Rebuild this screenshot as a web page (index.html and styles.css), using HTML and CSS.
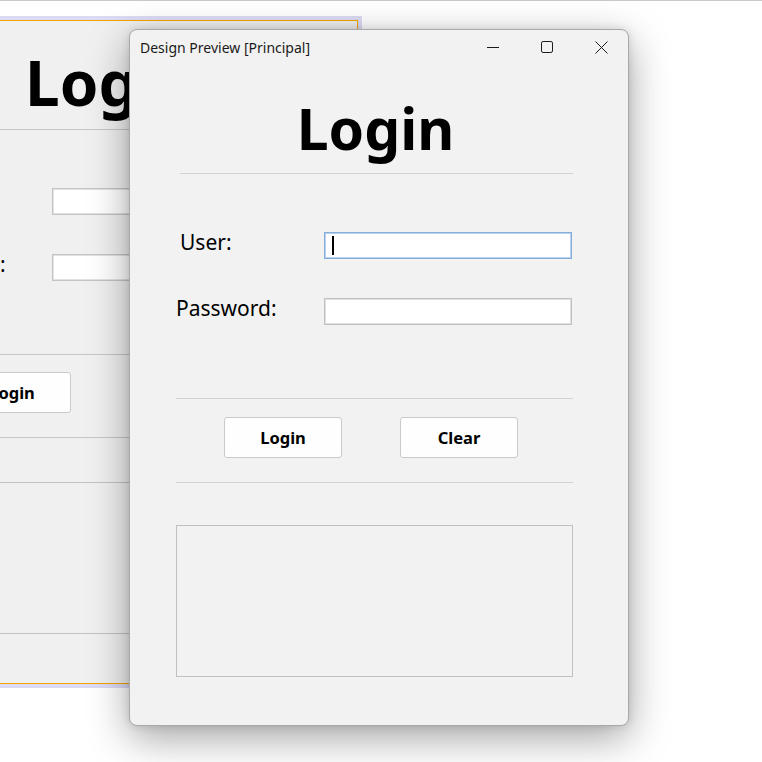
FILE: index.html
```html
<!DOCTYPE html>
<html>
<head>
<meta charset="utf-8">
<link rel="stylesheet" href="styles.css">
</head>
<body>
<div class="desktop">
  <div class="win back">
    <div class="b-heading">Login</div>
    <div class="b-rule first"></div>
    <div class="b-row r1"><span class="b-label">User:</span><div class="b-input"></div></div>
    <div class="b-row r2"><span class="b-label">Password:</span><div class="b-input"></div></div>
    <div class="b-rule r3"></div>
    <div class="b-btns"><div class="btn">Login</div></div>
    <div class="b-rule r4"></div>
    <div class="b-box"></div>
  </div>

  <div class="win front">
    <div class="titlebar">
      <span class="title">Design Preview [Principal]</span>
      <div class="caps">
        <div class="cap"><svg width="12" height="12" viewBox="0 0 12 12"><path d="M0 6.5H12" stroke="#1a1a1a" stroke-width="1" fill="none"/></svg></div>
        <div class="cap"><svg width="12" height="12" viewBox="0 0 12 12"><rect x="0.5" y="0.5" width="11" height="11" rx="1.6" stroke="#1a1a1a" stroke-width="1" fill="none"/></svg></div>
        <div class="cap"><svg width="13" height="13" viewBox="0 0 13 13"><path d="M0.5 0.5L12.5 12.5M12.5 0.5L0.5 12.5" stroke="#1a1a1a" stroke-width="1" fill="none"/></svg></div>
      </div>
    </div>
    <div class="content">
      <h1 class="heading">Login</h1>
      <div class="rule head-rule"></div>
      <div class="row user-row">
        <span class="label user-label">User:</span>
        <div class="input focused"><span class="caret"></span></div>
      </div>
      <div class="row pass-row">
        <span class="label">Password:</span>
        <div class="input"></div>
      </div>
      <div class="rule r-mid"></div>
      <div class="btns">
        <div class="btn">Login</div>
        <div class="btn">Clear</div>
      </div>
      <div class="rule r-low"></div>
      <div class="box"></div>
    </div>
  </div>
</div>
</body>
</html>
```

FILE: styles.css
```css
html, body {
  margin: 0;
  padding: 0;
}
body {
  width: 762px;
  height: 762px;
  overflow: hidden;
  background: #ffffff;
  font-family: "Noto Sans", "Open Sans", sans-serif;
  color: #000;
}
.desktop {
  position: relative;
  width: 762px;
  height: 762px;
  border-top: 1px solid #c9c9c9;
  box-sizing: border-box;
}
.win {
  position: absolute;
  box-sizing: border-box;
}

/* background window */
.back {
  left: -141px;
  top: 19px;
  width: 499px;
  height: 664px;
  background: #f0f0f0;
  border: 1px solid #f5a200;
  box-shadow: 0 0 0 4px #dcdbf5;
  overflow: hidden;
}
.b-heading {
  margin-top: 30px;
  padding-left: 165px;
  font-weight: 700;
  font-size: 62px;
  line-height: 63px;
  height: 63px;
  white-space: nowrap;
}
.b-rule {
  height: 1px;
  background: #c6c6c6;
}
.b-rule.first { margin-top: 15px; }
.b-row {
  display: flex;
  align-items: flex-start;
  padding-left: 45px;
  height: 27px;
}
.b-row.r1 { margin-top: 58px; }
.b-row.r2 { margin-top: 39px; }
.b-label {
  width: 147px;
  font-size: 21px;
  line-height: 27px;
  margin-top: -3px;
}
.b-input {
  width: 250px;
  height: 27px;
  box-sizing: border-box;
  background: #fff;
  border: 1px solid #c4c4c4;
  box-shadow: inset 0 0 0 1px #e2e2e2;
}
.b-rule.r3 { margin-top: 73px; }
.b-btns {
  margin-top: 17px;
  padding-left: 93px;
  display: flex;
}
.b-rule.r4 { margin-top: 24px; }
.b-box {
  margin-top: 44px;
  height: 150px;
  border-top: 1px solid #c2c2c2;
  border-bottom: 1px solid #c2c2c2;
}

/* front window */
.front {
  left: 129px;
  top: 28px;
  width: 500px;
  height: 697px;
  background: #f2f2f2;
  border: 1px solid #a9a9a9;
  border-radius: 8px;
  box-shadow: 0 12px 40px rgba(0, 0, 0, 0.36), 0 0 8px rgba(0, 0, 0, 0.12);
  display: flex;
  flex-direction: column;
}
.titlebar {
  height: 34px;
  display: flex;
  align-items: center;
  justify-content: space-between;
  padding-left: 10px;
}
.title {
  font-size: 14px;
  color: #1a1a1a;
  white-space: nowrap;
}
.caps {
  display: flex;
  height: 34px;
}
.cap {
  width: 54px;
  height: 34px;
  display: flex;
  align-items: center;
  justify-content: center;
}
.caps svg { display: block; }

.content {
  padding-left: 46px;
  padding-right: 55px;
  display: flex;
  flex-direction: column;
}
.heading {
  margin: 34px 0 0 0;
  font-size: 57px;
  font-weight: 700;
  line-height: 60px;
  height: 60px;
  text-align: center;
  padding-left: 2px;
}
.rule {
  height: 1px;
  background: #d2d2d2;
}
.head-rule {
  margin-top: 15px;
  margin-left: 4px;
}
.row {
  display: flex;
  align-items: flex-start;
  height: 27px;
}
.user-row { margin-top: 58px; }
.pass-row { margin-top: 39px; }
.label {
  width: 148px;
  font-size: 21px;
  line-height: 27px;
  margin-top: -3px;
  white-space: nowrap;
}
.user-label { padding-left: 4px; width: 144px; }
.input {
  width: 248px;
  height: 27px;
  box-sizing: border-box;
  background: #fff;
  border: 1px solid #c0c0c0;
  box-shadow: inset 0 0 0 1px #e0e0e0;
  display: flex;
  align-items: center;
  padding-left: 7px;
}
.input.focused {
  border-color: #86aedb;
  box-shadow: inset 0 0 0 1px #b9d1ee;
}
.caret {
  width: 2px;
  height: 19px;
  background: #000;
}
.r-mid { margin-top: 73px; }
.btns {
  margin-top: 18px;
  display: flex;
  gap: 58px;
  padding-left: 48px;
}
.btn {
  width: 118px;
  height: 41px;
  box-sizing: border-box;
  background: #fefefe;
  border: 1px solid #cacaca;
  border-radius: 3px;
  font-size: 16.5px;
  font-weight: 700;
  display: flex;
  align-items: center;
  justify-content: center;
}
.r-low { margin-top: 24px; }
.box {
  margin-top: 42px;
  height: 152px;
  box-sizing: border-box;
  border: 1px solid #c0c0c0;
  background: #f2f2f2;
}
```
